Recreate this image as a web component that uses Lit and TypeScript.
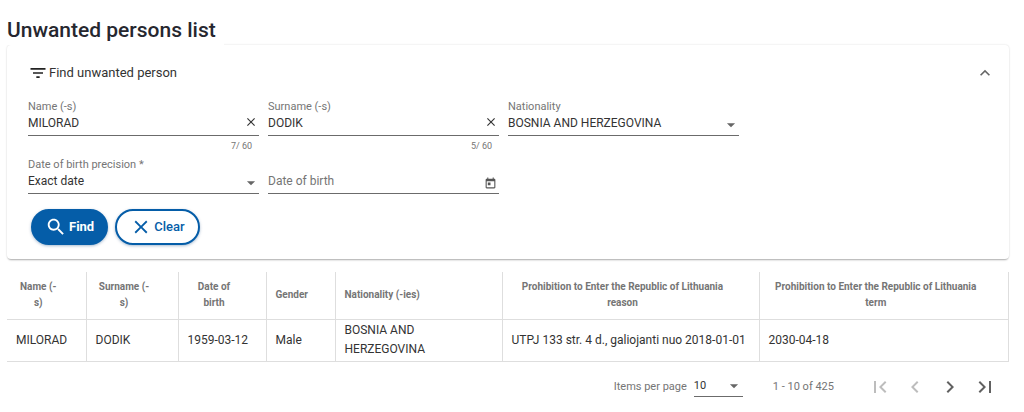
import { LitElement, html, css, svg } from "lit";
import { customElement, state } from "lit/decorators.js";

interface Person {
  name: string;
  surname: string;
  born: string;
  gender: string;
  nationality: string;
  reason: string;
  term: string;
}

const columns = [
  { title: "Name (-s)", cls: "c-name" },
  { title: "Surname (-s)", cls: "c-surname" },
  { title: "Date of birth", cls: "c-born" },
  { title: "Gender", cls: "c-gender" },
  { title: "Nationality (-ies)", cls: "c-nationality" },
  { title: "Prohibition to Enter the Republic of Lithuania reason", cls: "c-reason" },
  { title: "Prohibition to Enter the Republic of Lithuania term", cls: "c-term" },
];

const people: Person[] = [
  {
    name: "MILORAD",
    surname: "DODIK",
    born: "1959-03-12",
    gender: "Male",
    nationality: "BOSNIA AND HERZEGOVINA",
    reason: "UTPJ 133 str. 4 d., galiojanti nuo 2018-01-01",
    term: "2030-04-18",
  },
];

const icon = (shape: unknown, cls = "") =>
  html`<svg class="icon ${cls}" viewBox="0 0 24 24" aria-hidden="true">${shape}</svg>`;

const filterShape = svg`<path d="M10 18h4v-2h-4v2zM3 6v2h18V6H3zm3 7h12v-2H6v2z"/>`;
const chevronUpShape = svg`<path d="M12 8l-6 6 1.41 1.41L12 10.83l4.59 4.58L18 14z"/>`;
const closeShape = svg`<path d="M19 6.41L17.59 5 12 10.59 6.41 5 5 6.41 10.59 12 5 17.59 6.41 19 12 13.41 17.59 19 19 17.59 13.41 12z"/>`;
const crossShape = svg`<path d="M20 5.6L18.4 4 12 10.4 5.6 4 4 5.6 10.4 12 4 18.4 5.6 20 12 13.6 18.4 20 20 18.4 13.6 12z"/>`;
const searchShape = svg`<path d="M15.5 14h-.79l-.28-.27C15.41 12.59 16 11.11 16 9.5 16 5.91 13.09 3 9.5 3S3 5.91 3 9.5 5.91 16 9.5 16c1.61 0 3.09-.59 4.23-1.57l.27.28v.79l5 4.99L20.49 19l-4.99-5zm-6 0C7.01 14 5 11.99 5 9.5S7.01 5 9.5 5 14 7.01 14 9.5 11.99 14 9.5 14z"/>`;
const arrowShape = svg`<path d="M5 9h14l-7 7z"/>`;
const calendarShape = svg`<path d="M19 3h-1V1h-2v2H8V1H6v2H5c-1.11 0-1.99.9-1.99 2L3 19c0 1.1.89 2 2 2h14c1.1 0 2-.9 2-2V5c0-1.1-.9-2-2-2zm0 16H5V8h14v11zM7 10h5v5H7z"/>`;
const firstShape = svg`<path d="M18.41 16.59L13.82 12l4.59-4.59L17 6l-6 6 6 6zM6 6h2v12H6z"/>`;
const prevShape = svg`<path d="M15.41 7.41L14 6l-6 6 6 6 1.41-1.41L10.83 12z"/>`;
const nextShape = svg`<path d="M10 6L8.59 7.41 13.17 12l-4.58 4.59L10 18l6-6z"/>`;
const lastShape = svg`<path d="M5.59 7.41L10.18 12l-4.59 4.59L7 18l6-6-6-6zM16 6h2v12h-2z"/>`;

@customElement("app-root")
export class AppRoot extends LitElement {
  @state() private name = "MILORAD";
  @state() private surname = "DODIK";

  static styles = css`
    :host {
      display: block;
      box-sizing: border-box;
      padding: 16px 15px 0 7px;
      background: #fff;
      color: #333;
      font: 12px/18px Roboto, sans-serif;
    }
    *, *::before, *::after { box-sizing: border-box; }
    button, input, select {
      font: inherit;
      color: inherit;
      margin: 0;
      padding: 0;
      border: 0;
      background: none;
      border-radius: 0;
      outline: none;
      appearance: none;
    }
    button { cursor: pointer; }
    .icon { display: block; width: 20px; height: 20px; fill: currentColor; flex: none; }
    .title {
      position: relative;
      width: fit-content;
      margin: 0;
      padding-right: 8px;
      background: #fff;
      font-size: 21px;
      line-height: 29px;
      font-weight: 500;
      color: #26272f;
    }
    .card {
      padding: 0 30px 14px 21px;
      border-radius: 4px;
      background: #fff;
      box-shadow: 0 2px 2px -1px rgba(0, 0, 0, 0.3), 0 0 2px rgba(0, 0, 0, 0.16);
    }
    .head {
      display: flex;
      align-items: center;
      width: 100%;
      height: 55px;
      text-align: left;
      font-size: 13px;
      gap: 1px;
    }
    .head .icon { color: #222; }
    .head .up { margin: 0 -16px 0 auto; color: #666; }
    .fields {
      display: grid;
      grid-template-columns: repeat(4, 1fr);
      column-gap: 9px;
    }
    .field { height: 58px; }
    .label { display: block; height: 14px; font-size: 11px; line-height: 14px; color: #757575; }
    .control {
      display: grid;
      grid-template-columns: 1fr 17px;
      align-items: start;
      height: 22px;
      border-bottom: 1px solid #6b6b6b;
    }
    .control > * { grid-row: 1; }
    .control input { grid-column: 1; width: 100%; height: 18px; }
    .control select { grid-column: 1 / 3; width: 100%; height: 18px; }
    .control input::placeholder { color: #757575; opacity: 1; }
    .control .arrow { grid-column: 2; justify-self: center; align-self: center; }
    .control button { grid-column: 2; height: 20px; }
    .arrow { width: 14px; height: 14px; color: #666; pointer-events: none; }
    .icon.cross { width: 12px; height: 12px; margin: 0 auto 5px; color: #333; }
    .icon.calendar { width: 13px; height: 13px; margin: 2px auto 0; color: #555; }
    .hint { padding-right: 7px; font-size: 9px; line-height: 20px; color: #757575; text-align: right; }
    .actions { display: flex; gap: 7px; padding: 0 3px; margin-top: -7px; }
    .btn {
      display: flex;
      align-items: center;
      gap: 2px;
      height: 36px;
      padding: 0 13px;
      border: 2px solid #055da8;
      border-radius: 18px;
      font-size: 13px;
      font-weight: 500;
      box-shadow: 0 1px 3px rgba(0, 60, 120, 0.35);
    }
    .btn .icon { width: 22px; height: 22px; }
    .find { padding: 0 12px; background: #055da8; color: #fff; font-weight: 700; }
    .clear { background: #fff; color: #055da8; }
    table {
      width: 100%;
      margin-top: 13px;
      border-collapse: collapse;
      table-layout: fixed;
    }
    th, td { padding: 0 9px; border: 1px solid #dedede; text-align: left; font-weight: 400; }
    th { height: 47px; padding-right: 25px; border-top: 0; font-size: 10px; line-height: 16px; font-weight: 700; color: #757575; }
    td { height: 42px; line-height: 19px; }
    th:first-child, td:first-child { border-left: 0; }
    .th-text { display: inline-block; text-align: center; vertical-align: middle; }
    .c-name { width: 79px; }
    .c-surname { width: 92px; }
    .c-born { width: 88px; }
    .c-gender { width: 69px; }
    .c-nationality { width: 167px; }
    .c-reason { width: 257px; }
    .pager {
      display: flex;
      align-items: center;
      justify-content: flex-end;
      height: 50px;
      padding-right: 7px;
      font-size: 11px;
      color: #757575;
    }
    .size { width: 49px; height: 20px; margin-left: 7px; color: #333; }
    .range { margin: 0 28px 0 30px; }
    .nav { display: grid; place-items: center; width: 35px; height: 35px; color: #616161; }
    .nav:disabled { color: #bdbdbd; cursor: default; }
    .nav .icon { width: 24px; height: 24px; }
  `;

  private textField(id: string, label: string, value: string, set: (v: string) => void) {
    return html`<div class="field">
      <label class="label" for=${id}>${label}</label>
      <div class="control">
        <input id=${id} maxlength="60" .value=${value}
          @input=${(e: Event) => set((e.target as HTMLInputElement).value)} />
        <button type="button" aria-label="Clear ${label}" @click=${() => set("")}>${icon(crossShape, "cross")}</button>
      </div>
      <div class="hint">${value.length}/ 60</div>
    </div>`;
  }

  private selectField(id: string, label: string, option: string) {
    return html`<div class="field">
      <label class="label" for=${id}>${label}</label>
      <div class="control">
        <select id=${id}><option>${option}</option></select>
        ${icon(arrowShape, "arrow")}
      </div>
    </div>`;
  }

  private clear() {
    this.name = "";
    this.surname = "";
  }

  render() {
    return html`
      <h1 class="title">Unwanted persons list</h1>
      <form class="card" @submit=${(e: Event) => e.preventDefault()}>
        <button class="head" type="button" aria-expanded="true">
          ${icon(filterShape)}<span>Find unwanted person</span>${icon(chevronUpShape, "up")}
        </button>
        <div class="fields">
          ${this.textField("name", "Name (-s)", this.name, (v) => (this.name = v))}
          ${this.textField("surname", "Surname (-s)", this.surname, (v) => (this.surname = v))}
          ${this.selectField("nationality", "Nationality", "BOSNIA AND HERZEGOVINA")}
        </div>
        <div class="fields">
          ${this.selectField("precision", "Date of birth precision *", "Exact date")}
          <div class="field">
            <span class="label"></span>
            <div class="control">
              <input id="born" aria-label="Date of birth" placeholder="Date of birth" />
              <button type="button" aria-label="Open calendar">${icon(calendarShape, "calendar")}</button>
            </div>
          </div>
        </div>
        <div class="actions">
          <button class="btn find" type="submit">${icon(searchShape)}Find</button>
          <button class="btn clear" type="button" @click=${this.clear}>${icon(closeShape)}Clear</button>
        </div>
      </form>
      <table>
        <thead>
          <tr>${columns.map((c) => html`<th class=${c.cls} scope="col"><span class="th-text">${c.title}</span></th>`)}</tr>
        </thead>
        <tbody>
          ${people.map((p) => html`<tr>
            <td>${p.name}</td><td>${p.surname}</td><td>${p.born}</td><td>${p.gender}</td>
            <td>${p.nationality}</td><td>${p.reason}</td><td>${p.term}</td>
          </tr>`)}
        </tbody>
      </table>
      <div class="pager">
        <label for="size">Items per page</label>
        <div class="control size">
          <select id="size"><option>10</option></select>
          ${icon(arrowShape, "arrow")}
        </div>
        <span class="range">1 - 10 of 425</span>
        <button class="nav" aria-label="First page" disabled>${icon(firstShape)}</button>
        <button class="nav" aria-label="Previous page" disabled>${icon(prevShape)}</button>
        <button class="nav" aria-label="Next page">${icon(nextShape)}</button>
        <button class="nav" aria-label="Last page">${icon(lastShape)}</button>
      </div>
    `;
  }
}
